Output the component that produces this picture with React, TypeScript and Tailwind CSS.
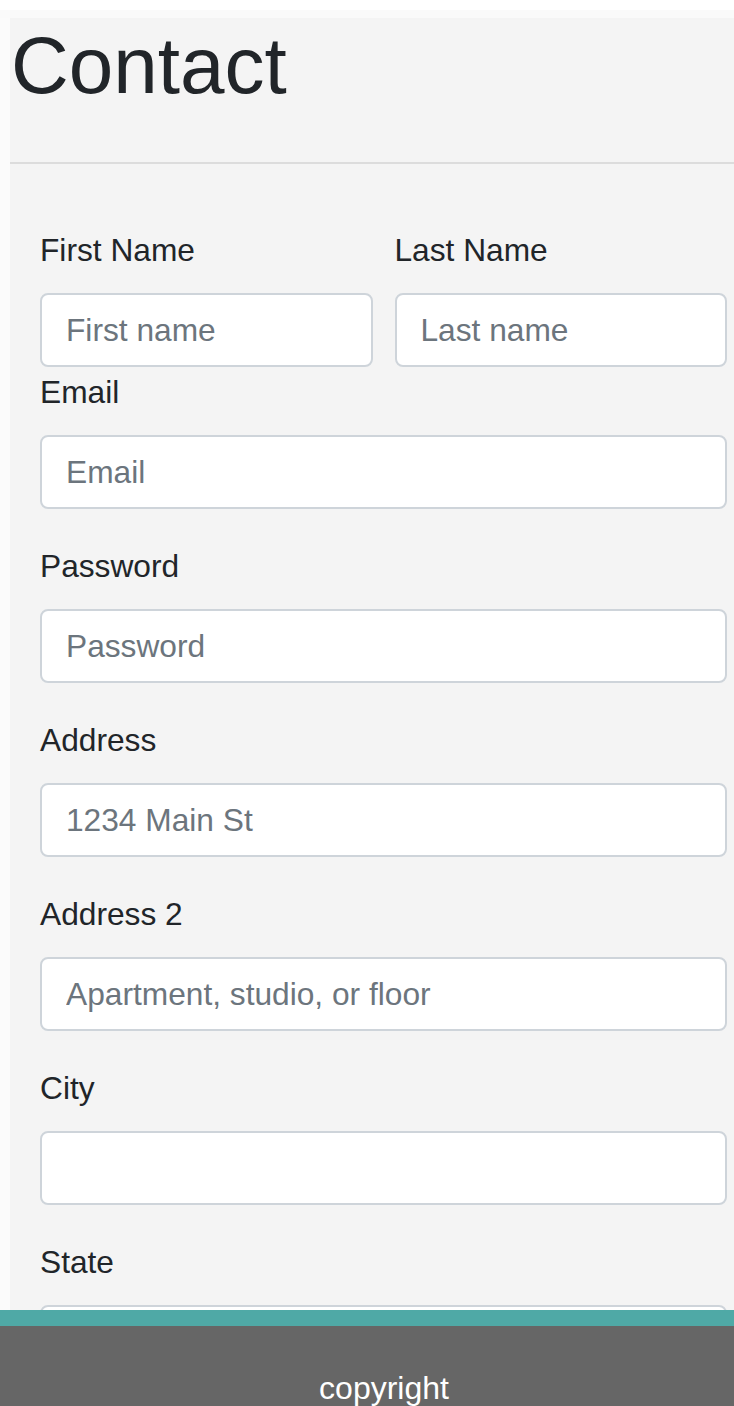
import React from "react";

const font = { fontFamily: '"Liberation Sans", Arial, Helvetica, sans-serif' };

function Field({
  label,
  placeholder,
  type = "text",
  className = "",
}: {
  label: string;
  placeholder?: string;
  type?: string;
  className?: string;
}) {
  return (
    <div className={className}>
      <label className="block text-[31.7px] leading-[44px] text-[#212529] mb-[21px]">{label}</label>
      <input
        type={type}
        placeholder={placeholder}
        className="block w-full h-[74px] bg-white border-2 border-[#ced4da] rounded-[8px] pl-[24px] pr-[23px] text-[31.7px] text-[#495057] placeholder:text-[#6c757d] outline-none"
      />
    </div>
  );
}

export default function App() {
  return (
    <div className="min-h-[1406px] bg-white relative overflow-hidden" style={font}>
      <div className="h-[10px] bg-white" />
      <div className="h-[8px] bg-[#fafafa]" />
      <div className="flex">
        <div className="w-[10px] shrink-0 bg-[#fbfbfb]" />
        <div className="flex-1 bg-[#f4f4f4] min-h-[1400px]">
          <h1 className="text-[80px] leading-[95px] text-[#212529] m-0 pl-[1px]">Contact</h1>
          <div className="h-[49px]" />
          <div className="h-[2px] bg-[#dcdcdc]" />
          <div className="h-[64px]" />
          <form className="pl-[30px] pr-[7px]">
            <div className="grid grid-cols-2 gap-x-[22px] mb-[3px]">
              <Field label="First Name" placeholder="First name" />
              <Field label="Last Name" placeholder="Last name" />
            </div>
            <Field label="Email" placeholder="Email" type="email" className="mb-[35px]" />
            <Field label="Password" placeholder="Password" type="password" className="mb-[35px]" />
            <Field label="Address" placeholder="1234 Main St" className="mb-[35px]" />
            <Field label="Address 2" placeholder="Apartment, studio, or floor" className="mb-[35px]" />
            <Field label="City" className="mb-[35px]" />
            <Field label="State" className="mb-[35px]" />
          </form>
        </div>
      </div>
      <footer className="fixed bottom-0 left-0 right-0 h-[96px]">
        <div className="h-[16px] bg-[#4fa9a6]" />
        <div className="h-[80px] bg-[#666666] pt-[40px] pl-[34px] text-center">
          <span className="text-[32px] leading-[45px] text-white">copyright</span>
        </div>
      </footer>
    </div>
  );
}
